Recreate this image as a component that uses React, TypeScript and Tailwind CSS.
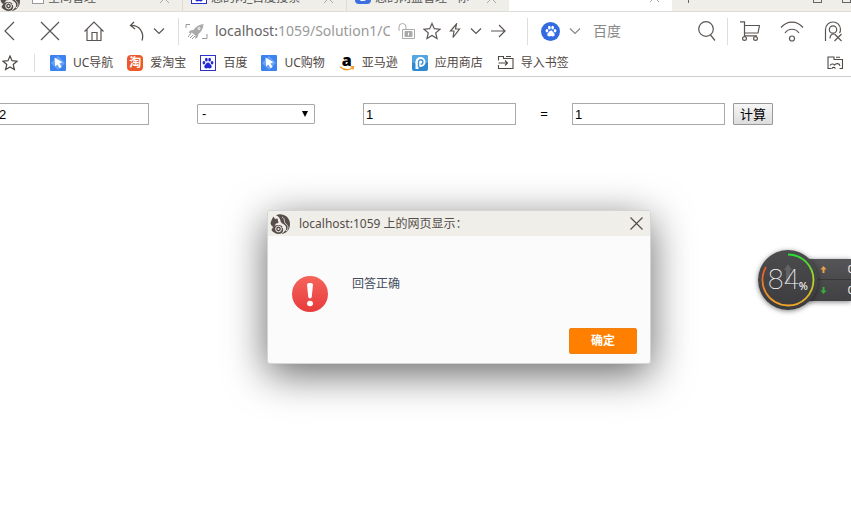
import { useState } from 'react';
import type { ReactNode } from 'react';

function Line({ w, h, className, width = 1, children }: { w: number; h: number; className?: string; width?: number; children: ReactNode }) {
  return (
    <svg
      width={w}
      height={h}
      viewBox={`0 0 ${w} ${h}`}
      fill="none"
      stroke="currentColor"
      strokeWidth={width}
      className={`shrink-0 ${className ?? ''}`}
      aria-hidden="true"
    >
      {children}
    </svg>
  );
}

function Chevron() {
  return (
    <Line w={12} h={8} width={1.2}>
      <path d="M1 1.5l5 5 5-5" />
    </Line>
  );
}

function Paw({ size, color }: { size: number; color: string }) {
  return (
    <svg width={size} height={size} viewBox="0 0 16 16" fill={color} aria-hidden="true">
      <ellipse cx="2.6" cy="7.6" rx="1.8" ry="2.3" />
      <ellipse cx="5.8" cy="3.6" rx="1.8" ry="2.5" />
      <ellipse cx="10.2" cy="3.6" rx="1.8" ry="2.5" />
      <ellipse cx="13.4" cy="7.6" rx="1.8" ry="2.3" />
      <path d="M8 7.2c2.2 0 2.6 2 4 3.4 1.8 1.8.8 4.6-1.5 4.6-1 0-1.500-.4-2.500-.4s-1.500.4-2.500.4c-2.300 0-3.300-2.800-1.500-4.600C5.400 9.200 5.800 7.200 8 7.200z" />
    </svg>
  );
}

function BaiduBox() {
  return (
    <span className="flex size-4 shrink-0 items-center justify-center border border-[#2b32c8] bg-white">
      <Paw size={12} color="#2228d2" />
    </span>
  );
}

function Squirrel({ size }: { size: number }) {
  return (
    <svg width={size} height={size} viewBox="0 0 20 20" className="shrink-0" aria-hidden="true">
      <path d="M6 1.200C12-1.500 20 2.500 20 10c0 6-4 9.500-8.500 10 3-2 5-4.500 4.500-7-.6-3-5-3-5.500-6C10.200 4.500 9 2.500 6 1.200z" fill="#574d49" />
      <path d="M.5 9l1.500-4 1.500-2.500L5 5l2.500-.5 1 4.500-2.500.5L4 13c-1.500 0-3-1.500-3.500-4z" fill="#574d49" />
      <path d="M1.500 16c1.500-4 4.500-5.500 8-5 3.500.8 5 4.500 2.500 8-4 2-8 .5-10.500-3z" fill="#574d49" />
      <path d="M12 3c4 2 1 5 4 7s2 5 .5 7" fill="none" stroke="#efeee8" strokeWidth=".8" />
      <circle cx="8.500" cy="15" r="2.900" fill="none" stroke="#efeee8" strokeWidth="1" />
      <circle cx="8.500" cy="15" r="1" fill="#efeee8" />
      <path d="M12 13l5 4" stroke="#efeee8" strokeWidth="1" />
    </svg>
  );
}

function UcIcon() {
  return (
    <svg width="16" height="16" viewBox="0 0 16 16" className="shrink-0" aria-hidden="true">
      <rect width="16" height="16" rx="1" fill="#3c83ef" />
      <path d="M1 8l7-7 7 7-7 7z" fill="#66a3f8" />
      <path d="M4.500 2.500l8 4.700-3 1.200 2.200 3.600-2.100 1.200-2.100-3.700L5.200 11.500z" fill="#fff" />
    </svg>
  );
}

function TaobaoIcon() {
  return (
    <span className="flex size-4 shrink-0 items-center justify-center rounded-sm bg-[#ec5a2c] text-xs font-bold text-white">淘</span>
  );
}

function AmazonIcon() {
  return (
    <span className="relative flex h-4 w-4 shrink-0 justify-center font-['Open_Sans'] text-base leading-[11px] font-extrabold text-black">
      a
      <svg width="16" height="5" viewBox="0 0 16 5" className="absolute bottom-0 left-0" aria-hidden="true">
        <path d="M1 .8c4 3.500 9 3.600 13 1M11.500.8l3-.3-.8 3" fill="none" stroke="#f09a22" strokeWidth="1.300" />
      </svg>
    </span>
  );
}

function StoreIcon() {
  return (
    <svg width="16" height="16" viewBox="0 0 16 16" className="shrink-0" aria-hidden="true">
      <rect width="16" height="16" rx="2" fill="#3289cd" />
      <rect width="16" height="8" rx="2" fill="#55a5e0" />
      <circle cx="8.500" cy="7" r="5" fill="#fff" />
      <path d="M3.500 7v7h3V7z" fill="#fff" />
      <path d="M6.500 12V7a2.200 2.200 0 1 1 2.200 2.200" fill="none" stroke="#3f92d3" strokeWidth="1.400" />
    </svg>
  );
}

function ImportIcon() {
  return (
    <Line w={17} h={16} width={1.1}>
      <path d="M1.500 5.500v-4h5v2h9.500v10H1.500v-3.500M9 1.500h5M1.500 8h9M8 5.500L10.500 8 8 10.500" />
    </Line>
  );
}

const bookmarks = [
  { name: 'UC导航', icon: <UcIcon /> },
  { name: '爱淘宝', icon: <TaobaoIcon /> },
  { name: '百度', icon: <BaiduBox /> },
  { name: 'UC购物', icon: <UcIcon /> },
  { name: '亚马逊', icon: <AmazonIcon /> },
  { name: '应用商店', icon: <StoreIcon /> },
  { name: '导入书签', icon: <ImportIcon /> },
];

function TabClose() {
  return (
    <Line w={11} h={11} className="text-[#aaa]">
      <path d="M1 1l9 9M10 1l-9 9" />
    </Line>
  );
}

function Tabs() {
  return (
    <div className="flex h-3 items-end overflow-hidden border-b border-[#dddcd7] bg-[#efeee9] text-xs leading-3 whitespace-nowrap text-[#555]">
      <div className="flex h-8 w-5 shrink-0 items-end">
        <Squirrel size={20} />
      </div>
      <div className="flex h-8 w-[163px] shrink-0 items-end gap-1 border-r border-[#dcdbd6] pr-3 pb-[7px] pl-3">
        <span className="size-3 border border-[#999] bg-white" />
        <span className="flex-1">空间管理</span>
        <TabClose />
      </div>
      <div className="flex h-8 w-[164px] shrink-0 items-end gap-1 border-r border-[#dcdbd6] pr-3 pb-[7px] pl-2">
        <BaiduBox />
        <span className="flex-1">您的网_百度搜索</span>
        <TabClose />
      </div>
      <div className="flex h-8 w-[162px] shrink-0 items-end gap-1 pr-3 pb-[7px] pl-2">
        <span className="flex size-4 items-center justify-center rounded-sm bg-[#3e6fe0] text-white">@</span>
        <span className="flex-1">您的网盘管理 - 你</span>
        <TabClose />
      </div>
      <div className="flex h-8 w-[163px] shrink-0 items-end justify-end bg-white pr-3 pb-[8px]">
        <TabClose />
      </div>
      <div className="flex h-8 flex-1 items-end pr-0 pb-[8px] pl-4">
        <span className="h-3 w-px bg-[#666]" />
        <span className="ml-auto size-[9px] border border-[#666]" />
        <span className="ml-5 size-[9px] border border-[#666]" />
      </div>
    </div>
  );
}

function Toolbar() {
  return (
    <div className="flex h-[38px] items-center overflow-hidden text-[#5b5552]">
      <button aria-label="后退" className="ml-[3px]">
        <Line w={12} h={20} width={1.2}><path d="M11 1L2 10l9 9" /></Line>
      </button>
      <button aria-label="停止" className="ml-[25px]">
        <Line w={20} h={20} width={1.2}><path d="M1 1l18 18M19 1L1 19" /></Line>
      </button>
      <button aria-label="主页" className="ml-6">
        <Line w={20} h={20} width={1.2}>
          <path d="M.5 10.500L10 1l9.500 9.500M3 8.500V19.500h14V8.500M8 19.500v-8h5v8" />
        </Line>
      </button>
      <button aria-label="恢复" className="ml-[25px]">
        <Line w={16} h={20} width={1.3}>
          <path d="M5 1L1.500 4.500 6 8M1.500 4.500c9-.5 14 7 11.500 15" />
        </Line>
      </button>
      <button aria-label="更多" className="ml-2"><Chevron /></button>
      <span className="ml-[13px] h-[27px] w-px shrink-0 bg-[#ddd]" />
      <Line w={23} h={17} className="ml-[6px] text-[#999]">
        <path d="M1 5V1.500h4M22 11v4.500h-5M5 15l3-3M3 14l3-4M7 16l3-3" />
        <path d="M18.500 1C14 1.500 10.500 4 8.500 7L5 7.500 3.500 10l3.500-.3 3.500 3L10 16l2.500-1.500L13.500 11c3-2.500 5-6 5-10z" fill="#aaa" stroke="none" />
        <circle cx="14" cy="5.500" r="1" stroke="#fff" />
      </Line>
      <div className="ml-[7px] w-[175px] shrink-0 overflow-hidden font-['Noto_Sans'] text-sm leading-5 whitespace-nowrap text-[#999]">
        <span className="text-[#666]">localhost:</span>1059/Solution1/C
      </div>
      <Line w={18} h={17} className="ml-[8px] text-[#aaa]">
        <path d="M1 8V4a3.500 3.500 0 0 1 7 0v2M4.500 6.500h12v9h-12z" />
        <path d="M7 8.500h7v5H7z" fill="#aaa" />
        <path d="M10.500 9.500v3" stroke="#fff" />
      </Line>
      <button aria-label="收藏" className="ml-[7px]">
        <Line w={18} h={18} width={1.2}>
          <path d="M9 1.500l2.300 5.200 5.700.5-4.300 3.700 1.300 5.600-5-3-5 3 1.300-5.600L1 7.200l5.700-.5z" />
        </Line>
      </button>
      <button aria-label="加速" className="ml-[8px]">
        <Line w={12} h={16} width={1.2}><path d="M7.500 1L1.500 8H5l-1 6.500L10.500 6H6.500z" /></Line>
      </button>
      <button aria-label="展开" className="ml-[9px]"><Chevron /></button>
      <button aria-label="转到" className="ml-[9px]">
        <Line w={15} h={14} width={1.2}><path d="M0 7h14M8 1l6 6-6 6" /></Line>
      </button>
      <span className="ml-[21px] h-[27px] w-px shrink-0 bg-[#ddd]" />
      <span className="ml-[13px] flex size-[19px] shrink-0 items-center justify-center rounded-full bg-[#326be0]">
        <Paw size={12} color="#fff" />
      </span>
      <button aria-label="搜索引擎" className="ml-[9px] text-[#888]"><Chevron /></button>
      <input aria-label="搜索" placeholder="百度" className="ml-3 min-w-0 flex-1 text-sm outline-none placeholder:text-[#888]" />
      <button aria-label="搜索" className="ml-2">
        <Line w={18} h={20} width={1.2}>
          <circle cx="8" cy="8" r="7.300" />
          <path d="M12.500 14l4.500 5.500" />
        </Line>
      </button>
      <span className="ml-[11px] h-[27px] w-px shrink-0 bg-[#ddd]" />
      <button aria-label="购物" className="ml-3">
        <Line w={20} h={20} width={1.2}>
          <path d="M0 .8h4.500v14H17M4.500 4.500H19.500L18 12H4.500" />
          <circle cx="4.500" cy="17.500" r="1.900" />
          <circle cx="15.500" cy="17.500" r="1.900" />
        </Line>
      </button>
      <button aria-label="无线" className="ml-5">
        <Line w={24} h={21} width={1.2}>
          <path d="M1 6.500C7-.8 17-.8 23 6.500M5 12c3.500-5 10.500-5 14 0" />
          <circle cx="12" cy="17.500" r="2.500" />
        </Line>
      </button>
      <button aria-label="账户" className="mr-2 ml-5">
        <Line w={19} h={21} width={1.2}>
          <path d="M1.500 20V8.500a7.500 7.500 0 0 1 15 0c0 1.500-.3 2.500-1 3.500M6 17.500c0-3 1-4.500 4-4.500M10.500 13l7 7M17.500 13l-7 7" />
          <circle cx="9" cy="8.500" r="3.700" />
        </Line>
      </button>
    </div>
  );
}

function Bookmarks() {
  return (
    <nav className="flex h-[27px] items-center overflow-hidden border-b border-[#cfcec9] text-xs whitespace-nowrap text-[#4f4743]">
      <Line w={16} h={16} className="ml-[2px]" width={1.2}>
        <path d="M8 1l2 4.700 5 .5-3.800 3.300 1.200 5L8 12l-4.400 2.500 1.200-5L1 6.200l5-.5z" />
      </Line>
      <span className="ml-4 h-[18px] w-px shrink-0 bg-[#ddd]" />
      <div className="ml-[15px] flex gap-[14px]">
        {bookmarks.map((b) => (
          <a key={b.name} href="#" className="flex items-center gap-[7px]">
            {b.icon}
            {b.name}
          </a>
        ))}
      </div>
      <Line w={16} h={14} className="mr-2 ml-auto" width={1.1}>
        <path d="M4.500 12.500H1V1h6v2.500h8.500v9h-3M9 1.200h4M3 9.500c1-2 3.500-2 4.500-.5 1.500-2 5-2 5.500 1M5 12.500c.8-1.500 2.500-1.500 3.500 0" />
      </Line>
    </nav>
  );
}

const field = "h-[22px] w-[153px] shrink-0 border border-[#a9a9a9] bg-white px-[2px] font-['Liberation_Sans'] text-[13px] text-black";

function Calculator() {
  const [a, setA] = useState('2');
  const [op, setOp] = useState('-');
  const [b, setB] = useState('1');
  const [result, setResult] = useState('1');

  return (
    <form className="mt-[26px] -ml-1 flex items-center overflow-hidden" onSubmit={(e) => e.preventDefault()}>
      <input aria-label="第一个数" className={field} value={a} onChange={(e) => setA(e.target.value)} />
      <div className="relative ml-12 shrink-0">
        <select
          aria-label="运算符"
          value={op}
          onChange={(e) => setOp(e.target.value)}
          className="block h-5 w-[118px] appearance-none rounded-[1px] border border-[#a9a9a9] bg-white px-1 font-['Liberation_Sans'] text-[13px] leading-[18px] text-black"
        >
          <option>+</option>
          <option>-</option>
          <option>*</option>
          <option>/</option>
        </select>
        <svg width="6" height="6" viewBox="0 0 6 6" className="pointer-events-none absolute top-[7px] right-[7px]" aria-hidden="true">
          <path d="M0 0h6L3 6z" />
        </svg>
      </div>
      <input aria-label="第二个数" className={`${field} ml-12`} value={b} onChange={(e) => setB(e.target.value)} />
      <span className="w-14 shrink-0 text-center font-['Liberation_Sans'] text-[13px] text-black">=</span>
      <input aria-label="结果" className={field} value={result} onChange={(e) => setResult(e.target.value)} />
      <button className="ml-2 h-[22px] w-10 shrink-0 rounded-[1px] border border-[#999] bg-linear-to-b from-[#f6f6f6] to-[#dddddd] text-[13px] leading-5 text-black">
        计算
      </button>
    </form>
  );
}

function Alert({ onClose }: { onClose: () => void }) {
  return (
    <div
      role="dialog"
      aria-labelledby="alert-title"
      className="absolute top-[210px] left-[267px] w-96 overflow-hidden rounded-[3px] border border-[#d5d5d3] bg-[#fbfbfb] shadow-[0_10px_40px_rgba(0,0,0,0.6)]"
    >
      <div className="flex h-[25px] items-center bg-[#efeee8] pr-[7px] pl-[2px]">
        <Squirrel size={20} />
        <h2 id="alert-title" className="ml-[9px] flex-1 font-['Noto_Sans','Noto_Sans_CJK_SC',sans-serif] text-xs text-[#554d4a]">
          localhost:1059 上的网页显示：
        </h2>
        <button aria-label="关闭" onClick={onClose} className="text-[#554d4a]">
          <Line w={13} h={13} width={1.2}><path d="M.5.5l12 12M12.500.5l-12 12" /></Line>
        </button>
      </div>
      <div className="flex gap-6 px-6 pt-10">
        <svg width="36" height="36" viewBox="0 0 36 36" className="shrink-0" aria-hidden="true">
          <defs>
            <linearGradient id="alert-red" x1="0" y1="0" x2="0" y2="1">
              <stop offset="0" stopColor="#f5645a" />
              <stop offset="1" stopColor="#e83b3c" />
            </linearGradient>
          </defs>
          <circle cx="18" cy="18" r="18" fill="url(#alert-red)" />
          <path d="M15 8.500c0-2 6-2 6 0l-1.200 12c-.2 2.500-3.400 2.500-3.600 0z" fill="#fff" />
          <ellipse cx="18" cy="27.500" rx="3" ry="2.700" fill="#fff" />
        </svg>
        <p className="text-xs text-[#454c5c]">回答正确</p>
      </div>
      <div className="flex justify-end pt-4 pr-[13px] pb-[9px]">
        <button onClick={onClose} className="h-[26px] w-[68px] rounded-xs border border-[#f08010] bg-[#ff7f00] text-xs font-bold text-white">
          确定
        </button>
      </div>
    </div>
  );
}

function Speed({ color, up }: { color: string; up?: boolean }) {
  return (
    <div className="flex h-[21px] items-center justify-between pl-[14px]">
      <svg width="7" height="7" viewBox="0 0 6 7" aria-hidden="true">
        <path d={up ? 'M3 0l3 3.500H4V7H2V3.500H0z' : 'M3 7l3-3.500H4V0H2v3.500H0z'} fill={color} />
      </svg>
      <span className="-mr-[3px] text-[11px] text-white">0</span>
    </div>
  );
}

function MemoryBall() {
  return (
    <div className="absolute top-[250px] right-0 flex w-[93px] items-center">
      <div className="relative z-10 flex size-[60px] shrink-0 items-center justify-center rounded-full bg-linear-to-b from-[#4c4c4e] to-[#3c3c3e] text-white shadow-[0_1px_5px_rgba(0,0,0,0.5)]">
        <svg width="60" height="60" viewBox="0 0 60 60" className="absolute inset-0" fill="none" strokeWidth="1.800" aria-hidden="true">
          <defs>
            <linearGradient id="ring-right" x1="0" y1="0" x2="0" y2="1">
              <stop offset="0" stopColor="#27dd32" />
              <stop offset="0.500" stopColor="#b5d62a" />
              <stop offset="1" stopColor="#f0a52a" />
            </linearGradient>
            <linearGradient id="ring-left" x1="0" y1="0" x2="0" y2="1">
              <stop offset="0" stopColor="#e2562a" />
              <stop offset="1" stopColor="#f0a52a" />
            </linearGradient>
          </defs>
          <path d="M28 34v-14h-2l4-6 4 6h-2v14z" fill="#626264" />
          <path d="M30 4.500a25.500 25.500 0 0 1 0 51" stroke="url(#ring-right)" />
          <path d="M30 55.500A25.500 25.500 0 0 1 8 17" stroke="url(#ring-left)" />
        </svg>
        <span className="relative font-['Roboto'] text-[28px] leading-8 font-thin">84</span>
        <span className="relative mt-3 font-['Noto_Sans'] text-[11px] leading-4">%</span>
      </div>
      <div className="-ml-3 flex-1 divide-y divide-[#38383a] overflow-hidden bg-linear-to-b from-[#555557] to-[#414143] shadow-[0_1px_5px_rgba(0,0,0,0.5)]">
        <Speed up color="#f0a04a" />
        <Speed color="#36b03a" />
      </div>
    </div>
  );
}

export default function App() {
  const [open, setOpen] = useState(true);

  return (
    <div className="relative min-h-screen overflow-hidden bg-white font-['Noto_Sans','Noto_Sans_CJK_SC',sans-serif]">
      <header>
        <Tabs />
        <Toolbar />
        <Bookmarks />
      </header>
      <main>
        <Calculator />
      </main>
      {open && <Alert onClose={() => setOpen(false)} />}
      <MemoryBall />
    </div>
  );
}
